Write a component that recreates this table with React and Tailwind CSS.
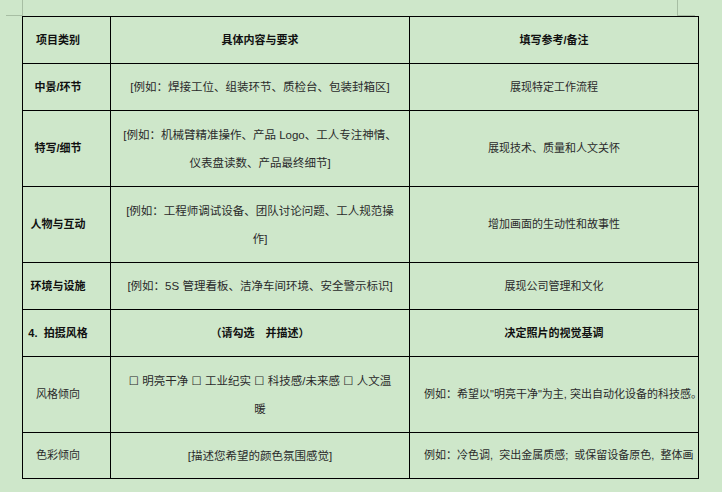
const ROWS = [
  {
    h: 'h-[47px]',
    head: true,
    a: '项目类别',
    b: ['具体内容与要求'],
    c: '填写参考/备注',
  },
  { h: 'h-[47px]', a: '中景/环节', aBold: true, b: ['[例如：焊接工位、组装环节、质检台、包装封箱区]'], c: '展现特定工作流程' },
  {
    h: 'h-[76px]',
    a: '特写/细节',
    aBold: true,
    b: ['[例如：机械臂精准操作、产品 Logo、工人专注神情、', '仪表盘读数、产品最终细节]'],
    c: '展现技术、质量和人文关怀',
  },
  {
    h: 'h-[76px]',
    a: '人物与互动',
    aBold: true,
    b: ['[例如：工程师调试设备、团队讨论问题、工人规范操', '作]'],
    c: '增加画面的生动性和故事性',
  },
  { h: 'h-[47px]', a: '环境与设施', aBold: true, b: ['[例如：5S 管理看板、洁净车间环境、安全警示标识]'], c: '展现公司管理和文化' },
  { h: 'h-[47px]', head: true, a: '4.  拍摄风格', b: ['（请勾选　并描述）'], c: '决定照片的视觉基调' },
  {
    h: 'h-[76px]',
    a: '风格倾向',
    b: ['☐ 明亮干净 ☐ 工业纪实 ☐ 科技感/未来感 ☐ 人文温', '暖'],
    c: '例如：希望以"明亮干净"为主, 突出自动化设备的科技感。',
    cLeft: true,
  },
  {
    h: 'h-[46px]',
    a: '色彩倾向',
    b: ['[描述您希望的颜色氛围感觉]'],
    c: '例如：冷色调,  突出金属质感;  或保留设备原色,  整体画',
    cLeft: true,
  },
]

export default function App() {
  return (
    <div
      className="w-[722px] h-[492px] bg-[#cee7ca] text-[11px] text-[#2a2a2a] overflow-hidden"
      style={{ fontFamily: '"Liberation Sans", "Noto Sans CJK SC", "DejaVu Sans", sans-serif' }}
    >
      {/* page crop marks */}
      <div className="flex h-[16px]">
        <div className="ml-[6px] w-[17px] border-r border-b border-[#a7bea3]" />
        <div className="ml-[654px] w-[18px] border-l border-b border-[#a7bea3]" />
      </div>

      <div className="pl-[22px]">
        <div className="grid grid-cols-[88px_299px_289px] w-fit border-l border-t border-black">
          {ROWS.map((r, i) => (
            <Row key={i} r={r} />
          ))}
        </div>
      </div>
    </div>
  )
}

function Row({ r }) {
  const cell = `${r.h} border-r border-b border-black flex items-center`
  return (
    <>
      <div className={`${cell} justify-center pl-[4px] pr-[21px] whitespace-pre ${r.head || r.aBold ? 'font-bold text-[#111]' : ''}`}>
        {r.a}
      </div>
      <div className={`${cell} justify-center px-[6px] ${r.head ? 'font-bold text-[#111]' : 'text-[11.5px]'}`}>
        <div className="text-center leading-[28px] whitespace-pre">
          {r.b.map((line, j) => (
            <div key={j}>{line}</div>
          ))}
        </div>
      </div>
      <div
        className={`${cell} whitespace-pre ${r.cLeft ? 'justify-start pl-[14px]' : 'justify-center'} ${
          r.head ? 'font-bold text-[#111]' : ''
        }`}
      >
        {r.c}
      </div>
    </>
  )
}
